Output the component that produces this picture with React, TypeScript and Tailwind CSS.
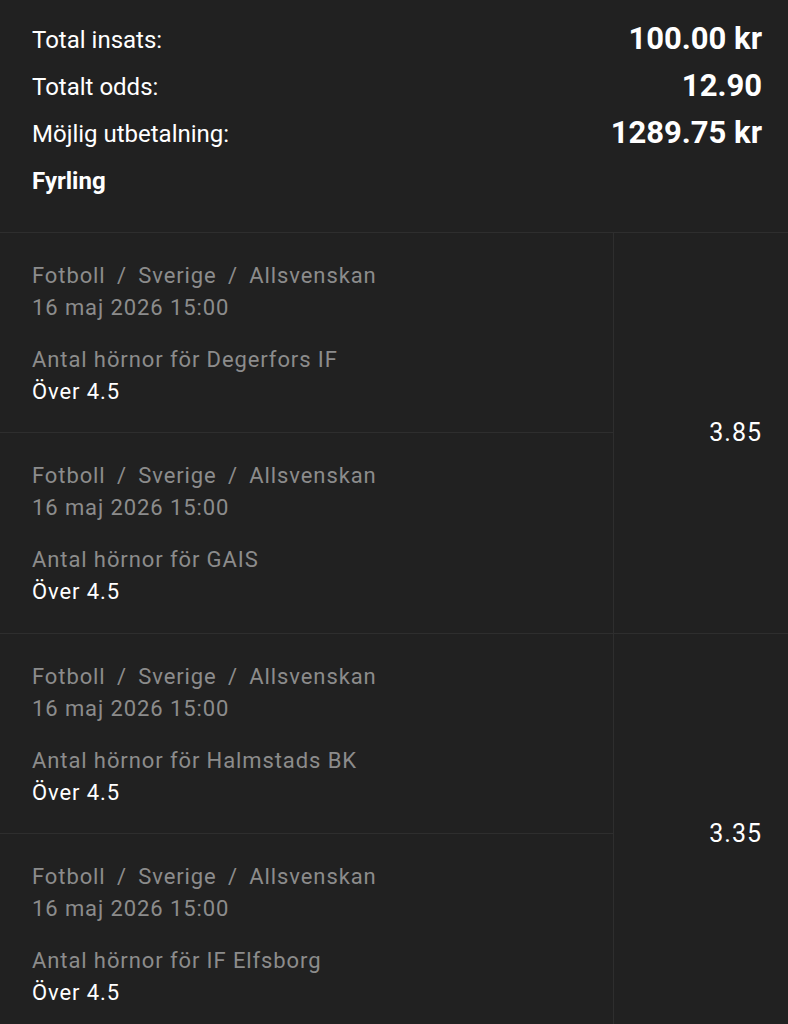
const legs = [
  [
    { team: 'Degerfors IF', pick: 'Över 4.5' },
    { team: 'GAIS', pick: 'Över 4.5' },
  ],
  [
    { team: 'Halmstads BK', pick: 'Över 4.5' },
    { team: 'IF Elfsborg', pick: 'Över 4.5' },
  ],
]
const odds = ['3.85', '3.35']

function SummaryRow({ label, value, bold }: { label: string; value?: string; bold?: boolean }) {
  return (
    <div className="flex h-[47px] items-center justify-between">
      <span className={bold ? 'text-2xl font-bold text-white' : 'text-2xl text-white'}>{label}</span>
      {value && <span className="text-[31px] font-bold text-white">{value}</span>}
    </div>
  )
}

export default function App() {
  return (
    <div className="min-h-screen bg-[#212121] font-['Roboto',sans-serif]">
      <div className="px-8 pt-4 pb-[28px] pr-[26px] border-b border-[#2e2e2e]">
        <SummaryRow label="Total insats:" value="100.00 kr" />
        <SummaryRow label="Totalt odds:" value="12.90" />
        <SummaryRow label="Möjlig utbetalning:" value="1289.75 kr" />
        <SummaryRow label="Fyrling" bold />
      </div>

      {legs.map((group, gi) => (
        <div key={gi} className="flex border-b border-[#2e2e2e]">
          <div className="w-[614px] border-r border-[#2e2e2e]">
            {group.map((leg, li) => (
              <div
                key={li}
                className={
                  li < group.length - 1
                    ? 'h-[200px] px-8 pt-[27px] tracking-[0.9px] border-b border-[#2e2e2e]'
                    : 'h-[200px] px-8 pt-[27px] tracking-[0.9px]'
                }
              >
                <p className="text-[22px] leading-8 text-[#8c8c8c]">
                  Fotboll <span className="mx-[5px]">/</span> Sverige <span className="mx-[5px]">/</span> Allsvenskan
                </p>
                <p className="text-[22px] leading-8 text-[#8c8c8c]">16 maj 2026 15:00</p>
                <p className="mt-5 text-[22px] leading-8 text-[#8c8c8c]">Antal hörnor för {leg.team}</p>
                <p className="text-[22px] leading-8 text-white">{leg.pick}</p>
              </div>
            ))}
          </div>
          <div className="flex flex-1 items-center justify-end pr-[26px]">
            <span className="text-[25px] tracking-[1px] text-white">{odds[gi]}</span>
          </div>
        </div>
      ))}
    </div>
  )
}
